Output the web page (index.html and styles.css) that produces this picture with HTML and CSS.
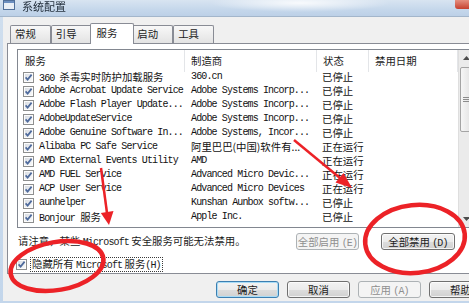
FILE: index.html
```html
<!DOCTYPE html>
<html lang="zh-CN">

<head>
    <meta charset="UTF-8" />
    <title>系统配置</title>
    <link rel="stylesheet" href="styles.css">
</head>

<body>
    <svg class="defs" width="0" height="0">
        <defs>
            <linearGradient id="cbfill" x1="0" y1="0" x2="1" y2="1">
                <stop offset="0" stop-color="#d9dde3" />
                <stop offset="1" stop-color="#f8f9fa" />
            </linearGradient>
        </defs>
        <symbol id="chk" viewBox="0 0 11 11">
            <rect x="0.5" y="0.5" width="10" height="10" fill="#fcfcfc" stroke="#8e8f8f" />
            <rect x="2" y="2" width="7" height="7" fill="url(#cbfill)" />
            <path d="M2.6 5.4 L4.6 7.6 L8.6 2.6" fill="none" stroke="#4e6a9c" stroke-width="1.7" />
        </symbol>
    </svg>

    <div class="window">
        <div class="titlebar">
            <svg class="app-icon" viewBox="0 0 12 10">
                <rect x="0.5" y="0.5" width="11" height="9" fill="#e9eff6" stroke="#51709a" />
                <rect x="1" y="1" width="10" height="2" fill="#6c8fc0" />
            </svg>
            <span class="title">系统配置</span>
            <span class="close"></span>
        </div>

        <div class="frame">
            <div class="dialog">
                <div class="tabs">
                    <div class="tab">常规</div>
                    <div class="tab">引导</div>
                    <div class="tab active">服务</div>
                    <div class="tab">启动</div>
                    <div class="tab">工具</div>
                </div>

                <div class="panel">
                    <div class="list">
                        <div class="list-main">
                            <div class="list-head">
                                <div>服务</div>
                                <div>制造商</div>
                                <div>状态</div>
                                <div>禁用日期</div>
                            </div>
                            <div class="row">
                                <div class="name"><svg class="cb"><use href="#chk" /></svg>360 <span class="zh">杀毒实时防护加载服务</span></div>
                                <div>360.cn</div>
                                <div class="state zh">已停止</div>
                                <div></div>
                            </div>
                            <div class="row">
                                <div class="name"><svg class="cb"><use href="#chk" /></svg>Adobe Acrobat Update Service</div>
                                <div>Adobe Systems Incorp...</div>
                                <div class="state zh">已停止</div>
                                <div></div>
                            </div>
                            <div class="row">
                                <div class="name"><svg class="cb"><use href="#chk" /></svg>Adobe Flash Player Update...</div>
                                <div>Adobe Systems Incorp...</div>
                                <div class="state zh">已停止</div>
                                <div></div>
                            </div>
                            <div class="row">
                                <div class="name"><svg class="cb"><use href="#chk" /></svg>AdobeUpdateService</div>
                                <div>Adobe Systems Incorp...</div>
                                <div class="state zh">已停止</div>
                                <div></div>
                            </div>
                            <div class="row">
                                <div class="name"><svg class="cb"><use href="#chk" /></svg>Adobe Genuine Software In...</div>
                                <div>Adobe Systems, Incor...</div>
                                <div class="state zh">已停止</div>
                                <div></div>
                            </div>
                            <div class="row">
                                <div class="name"><svg class="cb"><use href="#chk" /></svg>Alibaba PC Safe Service</div>
                                <div class="zh">阿里巴巴(中国)软件有...</div>
                                <div class="state zh">正在运行</div>
                                <div></div>
                            </div>
                            <div class="row">
                                <div class="name"><svg class="cb"><use href="#chk" /></svg>AMD External Events Utility</div>
                                <div>AMD</div>
                                <div class="state zh">正在运行</div>
                                <div></div>
                            </div>
                            <div class="row">
                                <div class="name"><svg class="cb"><use href="#chk" /></svg>AMD FUEL Service</div>
                                <div>Advanced Micro Devic...</div>
                                <div class="state zh">正在运行</div>
                                <div></div>
                            </div>
                            <div class="row">
                                <div class="name"><svg class="cb"><use href="#chk" /></svg>ACP User Service</div>
                                <div>Advanced Micro Devices</div>
                                <div class="state zh">正在运行</div>
                                <div></div>
                            </div>
                            <div class="row">
                                <div class="name"><svg class="cb"><use href="#chk" /></svg>aunhelper</div>
                                <div>Kunshan Aunbox softw...</div>
                                <div class="state zh">已停止</div>
                                <div></div>
                            </div>
                            <div class="row">
                                <div class="name"><svg class="cb"><use href="#chk" /></svg>Bonjour <span class="zh">服务</span></div>
                                <div>Apple Inc.</div>
                                <div class="state zh">已停止</div>
                                <div></div>
                            </div>
                        </div>

                        <div class="scrollbar">
                            <div class="sb-btn">
                                <svg width="7" height="4" viewBox="0 0 7 4"><path d="M0 4 L3.5 0 L7 4 Z" fill="#4d4d4d" /></svg>
                            </div>
                            <div class="sb-thumb"><span class="grip"></span></div>
                            <div class="sb-space"></div>
                            <div class="sb-btn">
                                <svg width="7" height="4" viewBox="0 0 7 4"><path d="M0 0 L3.5 4 L7 0 Z" fill="#4d4d4d" /></svg>
                            </div>
                        </div>
                    </div>

                    <div class="actions">
                        <span class="note">请注意，某些 <span class="en">Microsoft</span> 安全服务可能无法禁用。</span>
                        <button class="btn enable-all" disabled>全部启用 <span class="en">(E)</span></button>
                        <button class="btn disable-all">全部禁用 <span class="en">(D)</span></button>
                    </div>

                    <label class="hide-ms">
                        <svg class="cb"><use href="#chk" /></svg>
                        <span class="focus">隐藏所有 <span class="en">Microsoft</span> 服务<span class="en">(H)</span></span>
                    </label>
                </div>

                <div class="footer">
                    <button class="btn default">确定</button>
                    <button class="btn">取消</button>
                    <button class="btn" disabled>应用 <span class="en">(A)</span></button>
                    <button class="btn">帮助</button>
                </div>
            </div>
        </div>

        <!-- red markup drawn over the screenshot -->
        <svg class="marks" width="469" height="303" viewBox="0 0 469 303">
            <g fill="none" stroke="#ec2227" stroke-width="4.5">
                <ellipse cx="57" cy="266" rx="47" ry="24" transform="rotate(-10 57 266)" />
                <ellipse cx="415" cy="239" rx="50" ry="34" transform="rotate(-6 415 239)" />
            </g>
            <g stroke="#ec2227" stroke-width="2.5">
                <line x1="101" y1="168" x2="107" y2="213" />
                <line x1="294" y1="140" x2="340" y2="178" />
            </g>
            <g fill="#ec2227">
                <polygon points="109,225 113.5,211 100.8,213" />
                <polygon points="352,188 343.5,173 335.5,182.6" />
            </g>
        </svg>
    </div>
</body>

</html>
```

FILE: styles.css
```css
* {
    box-sizing: border-box;
}

html,
body {
    margin: 0;
}

body {
    width: 469px;
    height: 303px;
    overflow: hidden;
    font-family: "Noto Sans CJK SC", "Noto Sans", sans-serif;
    font-size: 10.4px;
    color: #1b1b1b;
    background: #c9dbee;
}

.defs {
    position: absolute;
}

.window {
    position: relative;
    width: 469px;
    height: 303px;
    display: flex;
    flex-direction: column;
}

/* title bar (blurred in the shot) */
.titlebar {
    height: 17px;
    flex: none;
    display: flex;
    align-items: flex-start;
    padding-left: 3px;
    border-bottom: 1px solid #a3b6cb;
    background:
        radial-gradient(ellipse 90px 9px at 300px 3px, rgba(255, 255, 255, 0.85), rgba(255, 255, 255, 0)),
        linear-gradient(180deg, #d8e4f1 0%, #c5d7eb 60%, #bcd0e7 100%);
}

.app-icon {
    width: 12px;
    height: 10px;
    margin-top: 0;
    filter: blur(0.4px);
}

.title {
    margin-left: 7px;
    font-size: 11px;
    line-height: 13px;
    color: #26323f;
    filter: blur(0.4px);
}

.close {
    margin-left: auto;
    width: 14px;
    height: 9px;
    border-radius: 0 0 0 3px;
    background: linear-gradient(180deg, #e58f80, #c6402f);
}

.frame {
    flex: 1;
    display: flex;
    padding: 0 0 4px 3px;
    background: linear-gradient(180deg, #cfdeee, #c3d6eb);
}

.dialog {
    flex: 1;
    min-width: 0;
    display: flex;
    flex-direction: column;
    background: #f0f0f0;
}

/* tabs */
.tabs {
    height: 26px;
    display: flex;
    align-items: flex-end;
    padding: 6px 0 0 7px;
}

.tab {
    height: 18px;
    padding: 0 14px 0 4px;
    border: 1px solid #898c95;
    border-bottom: 0;
    border-radius: 2px 2px 0 0;
    line-height: 16px;
    background: linear-gradient(180deg, #f8f8f8, #e3e3e3);
}

.tab.active {
    position: relative;
    z-index: 1;
    height: 21px;
    margin: 0 -2px -1px;
    padding: 0 16px 0 6px;
    line-height: 17px;
    background: #fff;
}

.panel {
    margin: 0 -40px 0 4px;
    padding: 5px 0 3px 9px;
    background: #fff;
    border: 1px solid #898c95;
}

/* service list */
.list {
    width: 457px;
    height: 179px;
    display: flex;
    border: 1px solid #828790;
    background: #fff;
}

.list-main {
    width: 440px;
    flex: none;
}

.list-head,
.row {
    display: grid;
    grid-template-columns: 167px 132px 52px 89px;
}

.list-head {
    height: 20px;
    line-height: 22px;
}

.list-head div {
    padding-left: 6px;
    border-right: 1px solid #e3e5e8;
}

.list-head div:first-child {
    padding-left: 7px;
}

.row {
    height: 14px;
    line-height: 14px;
    white-space: nowrap;
    font-family: "Liberation Mono", monospace;
    font-size: 10px;
    letter-spacing: -0.86px;
    color: #111;
}

.row>div {
    padding-left: 6px;
    overflow: hidden;
}

.row .name {
    padding-left: 5px;
}

.row .state {
    padding-left: 5px;
}

.zh {
    font-family: "Noto Sans CJK SC", sans-serif;
    font-size: 10.4px;
    letter-spacing: 0;
}

.en {
    font-family: "Liberation Mono", monospace;
    font-size: 10px;
    letter-spacing: -0.86px;
}

.cb {
    display: inline-block;
    width: 11px;
    height: 11px;
    vertical-align: top;
    margin: 2px 5px 0 0;
}

.scrollbar {
    width: 15px;
    flex: none;
    display: flex;
    flex-direction: column;
    background: #ebebeb;
    border-left: 1px solid #dedede;
}

.sb-btn {
    height: 16px;
    display: flex;
    align-items: center;
    justify-content: center;
}

.sb-thumb {
    height: 65px;
    margin: 1px 1px 0;
    display: flex;
    align-items: center;
    justify-content: center;
    border: 1px solid #a4a4a4;
    border-radius: 2px;
    background: linear-gradient(90deg, #f6f6f6, #e3e3e3);
}

.grip {
    width: 6px;
    height: 5px;
    border-top: 1px solid #8c8c8c;
    border-bottom: 1px solid #8c8c8c;
    background: linear-gradient(180deg, transparent 1px, #8c8c8c 1px, #8c8c8c 2px, transparent 2px);
}

.sb-space {
    flex: 1;
}

/* note + enable / disable all */
.actions {
    width: 457px;
    display: flex;
    align-items: center;
    margin-top: 4px;
    padding-right: 19px;
}

.note {
    flex: 1;
    padding-left: 1px;
    white-space: nowrap;
    line-height: 17px;
}

.btn {
    height: 17px;
    padding: 0;
    font-family: inherit;
    font-size: 10.4px;
    line-height: 15px;
    color: #1b1b1b;
    white-space: nowrap;
    border: 1px solid #707070;
    border-radius: 3px;
    background: linear-gradient(180deg, #f3f3f3 0%, #ebebeb 50%, #dddddd 51%, #d1d1d1 100%);
    box-shadow: inset 0 0 0 1px rgba(255, 255, 255, 0.75);
}

.btn:disabled {
    color: #8f8f8f;
    border-color: #adb2b5;
    background: #f4f4f4;
    box-shadow: none;
}

.btn.default {
    border-color: #3c7fb1;
    box-shadow: inset 0 0 0 1px #a9dcf6;
}

.enable-all {
    width: 63px;
    margin-right: 22px;
}

.disable-all {
    width: 74px;
}

.hide-ms {
    height: 12px;
    display: flex;
    align-items: center;
    margin: 7px 0 0 -1px;
}

.hide-ms .cb {
    margin: 0 4px 0 0;
}

.focus {
    padding: 0 1px;
    line-height: 11px;
    outline: 1px dotted #3a3a3a;
    white-space: nowrap;
}

/* dialog buttons */
.footer {
    display: flex;
    gap: 8px;
    padding: 7px 0 3px 213px;
}

.footer .btn {
    width: 63px;
    flex: none;
}

.marks {
    position: absolute;
    top: 0;
    left: 0;
    pointer-events: none;
}
```
